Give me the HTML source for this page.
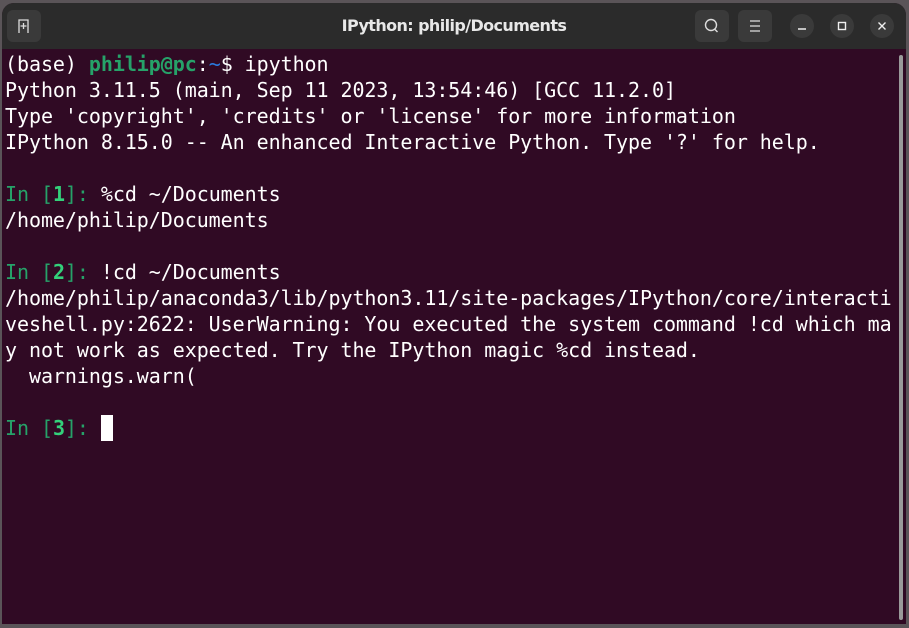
<!DOCTYPE html>
<html><head><meta charset="utf-8"><style>
html,body{margin:0;padding:0;width:909px;height:628px;overflow:hidden;background:#5a5458;}
.win{position:absolute;left:2px;top:3px;width:904px;height:621px;background:#300a24;border-radius:12px 12px 0 0;overflow:hidden;}
.tb{position:absolute;left:0;top:0;width:904px;height:46px;background:#2b2b2b;}
.title{position:absolute;left:0;width:904px;top:13px;text-align:center;color:#e8e8e8;font:bold 16px "DejaVu Sans","Liberation Sans",sans-serif;letter-spacing:-0.6px;}
.btn{position:absolute;top:7px;width:34px;height:32px;background:#3a3a3a;border-radius:6px;}
.cb{position:absolute;top:11px;width:24px;height:24px;border-radius:50%;background:#3a3a3a;}
.term{position:absolute;left:3px;top:48px;font:20px/26px "DejaVu Sans Mono","Liberation Mono",monospace;color:#ffffff;white-space:pre;letter-spacing:-0.06px;}
.g{color:#26a269;font-weight:bold}.b{color:#2a7bde}.gr{color:#26a269}.gb{color:#33d17a;font-weight:bold}
.cur{display:inline-block;width:12px;height:26px;background:#fff;vertical-align:top;}
.sb{position:absolute;left:897px;top:52px;width:4px;height:565px;background:#9a9a9a;border-radius:2px;}
</style></head><body>
<div class="win">
<div class="tb">
<div class="btn" style="left:5px"><svg width="34" height="32"><path d="M12 23V10h9v13M16.5 13v6M13.5 16h6" stroke="#ddd" stroke-width="1.3" fill="none"/></svg></div>
<div class="title">IPython: philip/Documents</div>
<div class="btn" style="left:693px"><svg width="34" height="32"><circle cx="16" cy="15" r="5.5" stroke="#ddd" stroke-width="1.4" fill="none"/><path d="M19.5 19l3 3" stroke="#ddd" stroke-width="1.4"/></svg></div>
<div class="btn" style="left:736px"><svg width="34" height="32"><path d="M12 11h10M12 16h10M12 21h10" stroke="#ddd" stroke-width="1.3"/></svg></div>
<div class="cb" style="left:788px"><svg width="24" height="24"><path d="M8 15h8" stroke="#eee" stroke-width="1.5"/></svg></div>
<div class="cb" style="left:828px"><svg width="24" height="24"><rect x="8.5" y="8.5" width="7" height="7" stroke="#eee" stroke-width="1.4" fill="none"/></svg></div>
<div class="cb" style="left:868px"><svg width="24" height="24"><path d="M8.5 8.5l7 7M15.5 8.5l-7 7" stroke="#eee" stroke-width="1.4"/></svg></div>
</div>
<div class="term">(base) <span class="g">philip@pc</span>:<span class="b">~</span>$ ipython
Python 3.11.5 (main, Sep 11 2023, 13:54:46) [GCC 11.2.0]
Type 'copyright', 'credits' or 'license' for more information
IPython 8.15.0 -- An enhanced Interactive Python. Type '?' for help.

<span class="gr">In [</span><span class="gb">1</span><span class="gr">]: </span>%cd ~/Documents
/home/philip/Documents

<span class="gr">In [</span><span class="gb">2</span><span class="gr">]: </span>!cd ~/Documents
/home/philip/anaconda3/lib/python3.11/site-packages/IPython/core/interacti
veshell.py:2622: UserWarning: You executed the system command !cd which ma
y not work as expected. Try the IPython magic %cd instead.
  warnings.warn(

<span class="gr">In [</span><span class="gb">3</span><span class="gr">]: </span><span class="cur"></span></div>
<div class="sb"></div>
</div>
</body></html>
